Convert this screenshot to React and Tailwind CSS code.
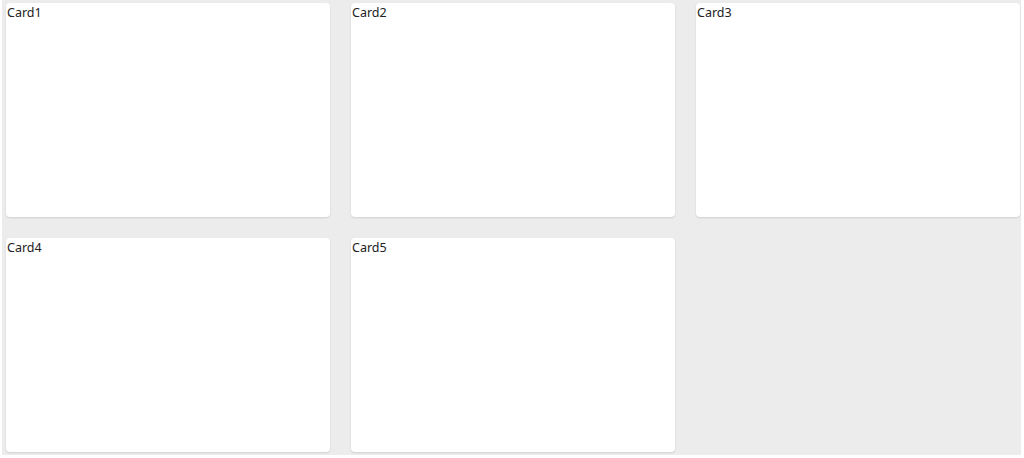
export default function App() {
  const cards = ['Card1', 'Card2', 'Card3', 'Card4', 'Card5']

  return (
    <div className="ml-[2px] w-[1019px] bg-[#ececec] pl-[4px] pr-[1px] pt-[3px] pb-[3px]">
      <div className="grid grid-cols-3 gap-x-[21px] gap-y-[21px]">
        {cards.map(name => (
          <div
            key={name}
            className="h-[214px] rounded-[4px] bg-white px-[1px] shadow-[0_1px_2px_rgba(0,0,0,0.12)]"
          >
            <p className="text-[12.5px] leading-[20px] text-[#222] font-['Noto_Sans',sans-serif]">{name}</p>
          </div>
        ))}
      </div>
    </div>
  )
}
